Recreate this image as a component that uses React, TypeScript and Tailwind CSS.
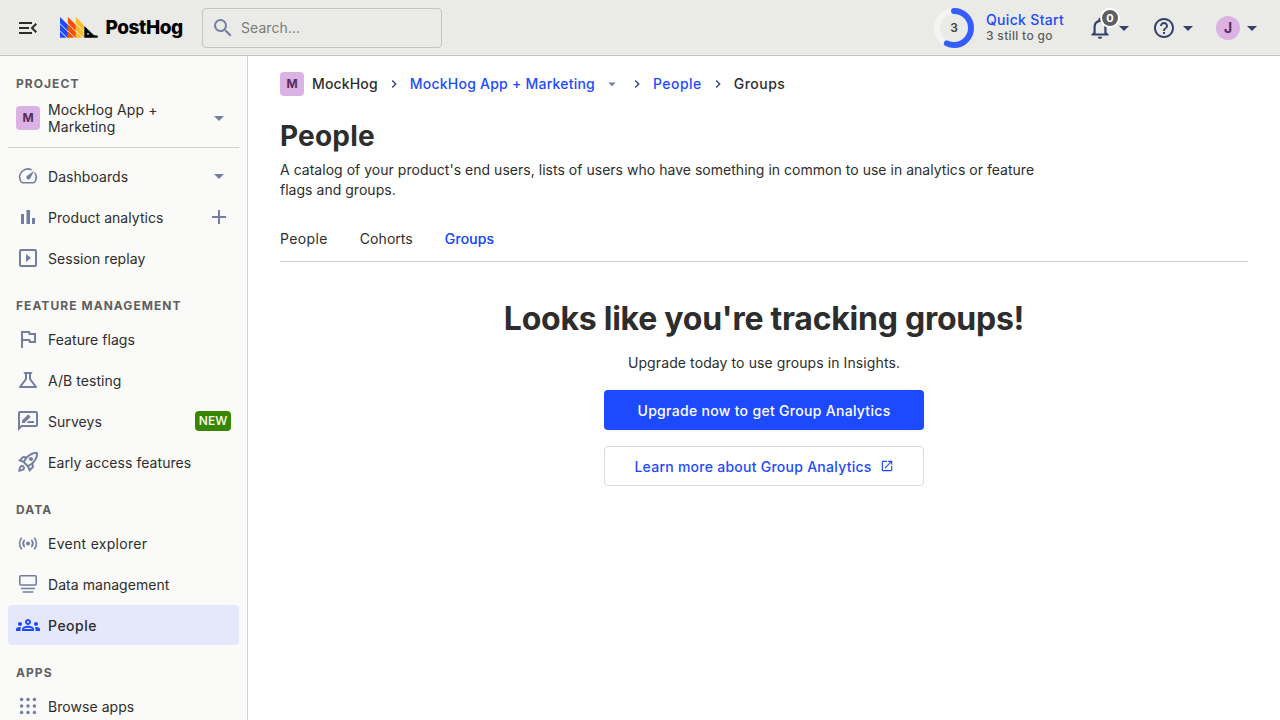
import type { ReactNode } from "react";
import {
  MdAdd,
  MdArrowDropDown,
  MdMenuOpen,
  MdOutlineFlag,
  MdHelpOutline,
  MdNotificationsNone,
  MdOutlineGroups,
  MdOutlineRocketLaunch,
  MdOutlineScience,
  MdSearch,
  MdChevronRight,
  MdOpenInNew,
} from "react-icons/md";

function Logo() {
  const columns = [
    { x: 0, fill: "#1d4aff" },
    { x: 7.9, fill: "#f54e00" },
    { x: 15.8, fill: "#f9bd2b" },
  ];
  return (
    <div className="flex items-center">
      <svg width="38" height="21" viewBox="0 0 38 21">
        {columns.map(({ x, fill }) => (
          <g key={x} fill={fill}>
            <path d={`M${x} 0l7.900 7.700v6.300l-7.900-7.700z`} />
            <path d={`M${x} 7.300l7.900 7.700v5.800h-.4l-7.500-7.200z`} />
            <path d={`M${x} 14.600l6.400 6.200h-6.400z`} />
          </g>
        ))}
        <path d="M24.300 9l8.900 8.600c.9.8 2.100 1 4.500 1v2.200H24.300z" fill="#000" />
        <circle cx="28" cy="16.900" r="0.9" fill="#eeefe9" />
      </svg>
      <span className="ml-[7.5px] pt-px text-[19px] leading-6 font-extrabold tracking-[-0.45px] text-black">PostHog</span>
    </div>
  );
}

function GaugeIcon() {
  return (
    <svg width="24" height="24" viewBox="0 0 24 24" fill="none" stroke="currentColor" strokeWidth="1.600">
      <path d="M15.700 5.900A8.200 8.200 0 0 0 4.500 16.600Q5 18.700 6.800 18.700H17.200Q19 18.700 19.500 16.600A8.200 8.200 0 0 0 18.700 8.600" />
      <path d="M18.200 6.800L14.200 14.600A2.100 2.100 0 1 1 10.800 12z" fill="currentColor" stroke="none" />
    </svg>
  );
}

function BarsIcon() {
  return (
    <svg width="24" height="24" viewBox="0 0 24 24" fill="currentColor">
      <path d="M5 9h3v10H5zM10.500 5h3.500v14h-3.500zM16 13h3v6h-3z" />
    </svg>
  );
}

function ReplayIcon() {
  return (
    <svg width="24" height="24" viewBox="0 0 24 24" fill="currentColor">
      <path d="M10 8v8l5-4-5-4zm9-5H5a2 2 0 0 0-2 2v14a2 2 0 0 0 2 2h14a2 2 0 0 0 2-2V5a2 2 0 0 0-2-2zm0 16H5V5h14v14z" />
    </svg>
  );
}

function SurveyIcon() {
  return (
    <svg width="24" height="24" viewBox="0 0 24 24" fill="currentColor">
      <path d="M20 2H4c-1.100 0-2 .9-2 2v18l4-4h14c1.100 0 2-.9 2-2V4c0-1.100-.9-2-2-2zm0 14H5.170L4 17.170V4h16v12zm-9.500-2H18v-2h-5.500l-2 2zm3.860-5.870a.5.500 0 0 0 0-.710l-1.770-1.770a.5.500 0 0 0-.710 0L6 11.530V14h2.470l5.890-5.870z" />
    </svg>
  );
}

function LiveIcon() {
  return (
    <svg width="24" height="24" viewBox="0 0 24 24" fill="none" stroke="currentColor" strokeWidth="1.700" strokeLinecap="round">
      <circle cx="12" cy="12.500" r="2" fill="currentColor" stroke="none" />
      <path d="M8.200 9.500a5 5 0 0 0 0 6M15.800 9.500a5 5 0 0 1 0 6M5.400 7.300a8.500 8.500 0 0 0 0 10.400M18.600 7.300a8.500 8.500 0 0 1 0 10.400" />
    </svg>
  );
}

function DataIcon() {
  return (
    <svg width="24" height="24" viewBox="0 0 24 24" fill="none" stroke="currentColor" strokeWidth="1.600" strokeLinecap="round">
      <rect x="3.800" y="3.800" width="16.400" height="9.200" rx="1" />
      <path d="M5.700 16.500h12.600M7.200 20h9.600" />
    </svg>
  );
}

function DotsIcon() {
  const stops = [5.6, 12, 18.4];
  return (
    <svg width="24" height="24" viewBox="0 0 24 24" fill="currentColor">
      {stops.map((y) => stops.map((x) => <circle key={`${x}-${y}`} cx={x} cy={y} r="1.75" />))}
    </svg>
  );
}

function Heading({ children }: { children: ReactNode }) {
  return (
    <li className="flex h-[39px] items-center px-2 pt-[14px] text-[12px] leading-4 font-bold tracking-[1.050px] text-[#5f5f5f] uppercase">
      {children}
    </li>
  );
}

type ItemProps = { icon: ReactNode; label: string; side?: ReactNode; active?: boolean; wide?: boolean };

function Item({ icon, label, side, active, wide }: ItemProps) {
  return (
    <li
      className={
        active
          ? "flex h-10 shrink-0 items-center rounded bg-[#e5e7fb] px-2 font-medium tracking-[0.5px] text-[#1d4aff]"
          : wide
            ? "flex h-10 shrink-0 items-center rounded px-2 tracking-[0.28px] text-[#747ea2]"
            : "flex h-10 shrink-0 items-center rounded px-2 tracking-[0.050px] text-[#747ea2]"
      }
    >
      <span className="flex w-6 justify-center">{icon}</span>
      <span className="ml-2 flex-1 pt-[1px] text-[14px] text-[#2d2d2d]">{label}</span>
      {side}
    </li>
  );
}

function Sidebar() {
  return (
    <nav className="flex w-[248px] shrink-0 flex-col overflow-hidden border-r border-[#d0d1cd] bg-[#fafaf8] px-2 pt-[1px]">
      <ul className="flex flex-col gap-px">
        <Heading>Project</Heading>
        <li className="flex h-[42px] items-center px-2 pb-px">
          <span className="flex h-6 w-6 items-center justify-center rounded bg-[#dcb1e3] text-[12px] font-bold text-[#572e5e]">M</span>
          <span className="ml-2 flex-1 text-[14px] leading-[17px] tracking-[0.12px] text-[#2d2d2d]">
            MockHog App +<br />
            Marketing
          </span>
          <MdArrowDropDown size={24} className="text-[#747ea2]" />
        </li>
      </ul>
      <hr className="my-2 border-[#d0d1cd]" />
      <ul className="flex flex-col gap-px">
        <Item icon={<GaugeIcon />} label="Dashboards" side={<MdArrowDropDown size={24} />} />
        <Item icon={<BarsIcon />} label="Product analytics" side={<MdAdd size={24} />} />
        <Item icon={<ReplayIcon />} label="Session replay" />
        <Heading>Feature management</Heading>
        <Item icon={<MdOutlineFlag size={24} />} label="Feature flags" />
        <Item icon={<MdOutlineScience size={24} />} label="A/B testing" />
        <Item
          icon={<SurveyIcon />}
          label="Surveys"
          side={<span className="flex h-5 w-9 items-center justify-center rounded bg-[#388600] text-[12px] font-medium text-white">NEW</span>}
        />
        <Item icon={<MdOutlineRocketLaunch size={24} />} label="Early access features" />
        <Heading>Data</Heading>
        <Item icon={<LiveIcon />} label="Event explorer" wide />
        <Item icon={<DataIcon />} label="Data management" />
        <Item icon={<MdOutlineGroups size={24} />} label="People" active />
        <Heading>Apps</Heading>
        <Item icon={<DotsIcon />} label="Browse apps" />
      </ul>
    </nav>
  );
}

function TopBar() {
  return (
    <header className="flex h-14 shrink-0 items-center border-b border-[#c5c6c1] bg-[#eaebe6] px-4">
      <MdMenuOpen size={24} className="text-[#2d2d2d]" />
      <div className="ml-5 w-[142px]">
        <Logo />
      </div>
      <div className="flex h-10 w-60 items-center rounded border border-[#c5c6c1] px-2 text-[#747ea2]">
        <MdSearch size={24} />
        <span className="ml-1.5 text-[14px] tracking-[0.050px] text-[#7c7c7a]">Search...</span>
      </div>
      <div className="ml-auto flex items-center">
        <div className="relative flex h-10 w-10 items-center justify-center">
          <svg className="absolute inset-0" width="40" height="40" viewBox="0 0 40 40" fill="none" strokeWidth="6">
            <circle cx="20" cy="20" r="17" stroke="#f4f4f3" />
            <circle
              cx="20"
              cy="20"
              r="17"
              stroke="#345cff"
              strokeLinecap="round"
              pathLength={100}
              strokeDasharray="57 100"
              transform="rotate(-90 20 20)"
            />
          </svg>
          <span className="text-[12px] font-semibold text-[#3f3f3f]">3</span>
        </div>
        <div className="ml-3 w-[102px]">
          <div className="text-[14px] leading-4 font-medium tracking-[0.32px] text-[#1d4aff]">Quick Start</div>
          <div className="text-[12px] leading-4 font-medium tracking-[0.32px] text-[#5f5f5f]">3 still to go</div>
        </div>
        <div className="relative flex items-center text-[#35416b]">
          <MdNotificationsNone size={26} className="-mx-px" />
          <MdArrowDropDown size={24} />
          <span className="absolute -top-[7px] left-3 flex h-5 w-5 items-center justify-center rounded-full border-2 border-white bg-[#5f5f5f] text-[11px] font-bold text-white">
            0
          </span>
        </div>
        <div className="ml-4 flex items-center text-[#35416b]">
          <MdHelpOutline size={24} />
          <MdArrowDropDown size={24} />
        </div>
        <div className="ml-4 flex items-center text-[#35416b]">
          <span className="flex h-6 w-6 items-center justify-center rounded-full bg-[#dcb1e3] text-[14px] font-bold text-[#572e5e]">J</span>
          <MdArrowDropDown size={24} />
        </div>
      </div>
    </header>
  );
}

export default function App() {
  return (
    <div className="flex h-[720px] w-[1280px] flex-col overflow-hidden bg-white font-['Inter',sans-serif] text-[14px] leading-5 text-[#2d2d2d]">
      <TopBar />
      <div className="flex min-h-0 flex-1">
        <Sidebar />
        <main className="flex-1 px-8 pt-4">
          <div className="flex h-6 items-center font-medium">
            <span className="flex h-6 w-6 items-center justify-center rounded bg-[#dcb1e3] text-[12px] font-bold text-[#572e5e]">M</span>
            <span className="ml-2 tracking-[0.15px]">MockHog</span>
            <MdChevronRight size={16} className="mx-2 text-[#35416b]" />
            <span className="tracking-[0.23px] text-[#1d4aff]">MockHog App + Marketing</span>
            <MdArrowDropDown size={18} className="ml-2 text-[#747ea2]" />
            <MdChevronRight size={16} className="mx-2 text-[#35416b]" />
            <span className="tracking-[0.45px] text-[#1d4aff]">People</span>
            <MdChevronRight size={16} className="mx-2 text-[#35416b]" />
            <span className="tracking-[0.5px]">Groups</span>
          </div>
          <h1 className="mt-6 text-[28px] leading-8 font-bold tracking-[0.2px]">People</h1>
          <p className="mt-2 w-[768px] tracking-[0.025px]">
            A catalog of your product's end users, lists of users who have something in common to use in analytics or feature flags and groups.
          </p>
          <div className="mt-4 flex h-[46px] items-center gap-8 border-b border-[#d0d1cd]">
            <span className="tracking-[0.38px]">People</span>
            <span className="tracking-[0.050px]">Cohorts</span>
            <span className="tracking-[0.2px] text-[#1d4aff] [text-shadow:0_0_0.25px_currentColor]">Groups</span>
          </div>
          <div className="flex flex-col items-center pt-[37px]">
            <h2 className="text-[32px] leading-10 font-bold tracking-[-0.25px]">Looks like you're tracking groups!</h2>
            <p className="mt-[14px] tracking-[0.1px]">Upgrade today to use groups in Insights.</p>
            <button className="mt-[17px] h-10 w-80 rounded bg-[#1d4aff] pt-0.5 font-medium tracking-[0.3px] text-white">
              Upgrade now to get Group Analytics
            </button>
            <button className="mt-4 flex h-10 w-80 items-center justify-center gap-2 rounded border border-[#dadada] font-medium tracking-[0.26px] text-[#1d4aff]">
              <span className="pt-0.5">Learn more about Group Analytics</span>
              <MdOpenInNew size={14} />
            </button>
          </div>
        </main>
      </div>
    </div>
  );
}
